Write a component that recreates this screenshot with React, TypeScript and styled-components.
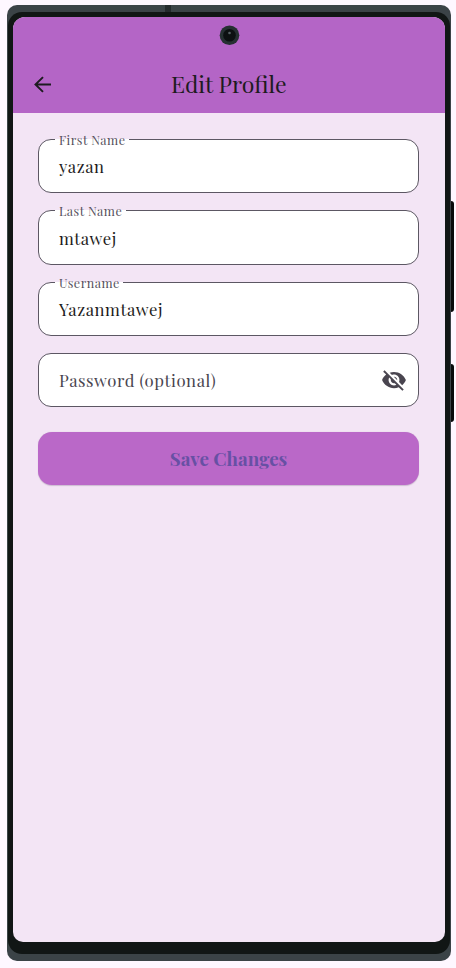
import React from "react";
import styled, { createGlobalStyle } from "styled-components";

const GlobalStyle = createGlobalStyle`
  * { box-sizing: border-box; }
  body {
    margin: 0;
    background: #fef7ff;
    font-family: "Playfair Display", "Liberation Serif", serif;
    overflow: hidden;
  }
`;

const Stage = styled.main`
  width: 456px;
  height: 968px;
  padding: 5px 0 0 7px;
`;

const Phone = styled.div`
  position: relative;
  width: 443.5px;
  height: 956px;
  padding: 7px 1px;
  border-radius: 10px;
  background: #3b4347;
`;

const Antenna = styled.span`
  position: absolute;
  top: 0;
  left: 158px;
  width: 6px;
  height: 7px;
  background: #242a2c;
`;

const SideButton = styled.span<{ $top: number; $height: number }>`
  position: absolute;
  left: 443px;
  top: ${(p) => p.$top}px;
  width: 4px;
  height: ${(p) => p.$height}px;
  border-radius: 0 3px 3px 0;
  border-left: 1px solid #3b4347;
  background: #080b0b;
`;

const Bezel = styled.div`
  height: 942px;
  padding: 5px 5px 12px;
  border-radius: 14px;
  background: #111615;
`;

const Screen = styled.div`
  width: 431.5px;
  height: 924.5px;
  border-radius: 12px 12px 10px 10px;
  overflow: hidden;
  background: #f3e5f5;
`;

const Header = styled.header`
  position: relative;
  height: 96.3px;
  padding: 38px 18px 0;
  display: grid;
  grid-template-columns: 24px 1fr 24px;
  align-items: center;
  background: #b465c6;
  color: #1d1b20;
`;

const Camera = styled.svg`
  position: absolute;
  top: 8px;
  left: 206px;
`;

const BackButton = styled.button`
  display: flex;
  padding: 0;
  border: 0;
  background: none;
  color: inherit;
`;

const Title = styled.h1`
  margin: 0;
  text-align: center;
  font-size: 23px;
  font-weight: 400;
  line-height: 32px;
  white-space: nowrap;
`;

const Form = styled.form`
  display: flex;
  flex-direction: column;
  gap: 17px;
  padding: 26px 25.5px 0 25px;
`;

const Field = styled.label`
  position: relative;
  display: flex;
  align-items: center;
  justify-content: space-between;
  height: 54.2px;
  padding: 0 11px 0 20px;
  border: 1px solid #5c5763;
  border-radius: 13px;
  background: #fff;
`;

const FloatingLabel = styled.span`
  position: absolute;
  top: -8px;
  left: 16px;
  padding: 0 3.5px 0 4px;
  background: linear-gradient(#f3e5f5 7px, #fff 7px);
  color: #55505c;
  font-size: 12.5px;
  line-height: 16px;
  letter-spacing: 0.5px;
  white-space: nowrap;
`;

const Value = styled.span<{ $muted?: boolean }>`
  color: ${(p) => (p.$muted ? "#49454f" : "#1d1b20")};
  font-size: 16.7px;
  line-height: 24px;
  letter-spacing: 0.55px;
`;

const SaveButton = styled.button`
  height: 53px;
  margin-top: 8px;
  padding: 0 0 1px;
  border: 0;
  border-radius: 14px;
  background: #ba68c8;
  box-shadow: 0 0.5px 1px rgba(70, 40, 80, 0.22);
  color: #6750a4;
  font-family: inherit;
  font-size: 18.8px;
  font-weight: 700;
`;

const fields = [
  { label: "First Name", value: "yazan" },
  { label: "Last Name", value: "mtawej" },
  { label: "Username", value: "Yazanmtawej" },
];

export default function App() {
  return (
    <>
      <GlobalStyle />
      <Stage>
        <Phone>
          <Antenna />
          <SideButton $top={196} $height={111} />
          <SideButton $top={359} $height={58} />
          <Bezel>
            <Screen>
              <Header>
                <Camera width="21" height="21" viewBox="0 0 21 21">
                  <circle cx="10.5" cy="10.3" r="9.8" fill="#263032" />
                  <circle cx="10.5" cy="10.3" r="6.3" fill="#0c1011" />
                  <circle cx="10.5" cy="8" r="1.3" fill="#566064" />
                </Camera>
                <BackButton type="button" aria-label="Back">
                  <svg width="25" height="25" viewBox="0 0 24 24">
                    <path
                      d="M20 11.1v1.8H6.9l5.8 5.8-1.4 1.4L3.1 12l8.2-8.1 1.4 1.4-5.8 5.8z"
                      fill="currentColor"
                    />
                  </svg>
                </BackButton>
                <Title>Edit Profile</Title>
              </Header>
              <Form>
                {fields.map((f) => (
                  <Field key={f.label}>
                    <FloatingLabel>{f.label}</FloatingLabel>
                    <Value>{f.value}</Value>
                  </Field>
                ))}
                <Field>
                  <Value $muted>Password (optional)</Value>
                  <svg width="26" height="26" viewBox="0 0 24 24" fill="#49454f">
                    <path d="M12 7c2.76 0 5 2.24 5 5 0 .65-.13 1.26-.36 1.83l2.92 2.92c1.51-1.26 2.7-2.89 3.43-4.75-1.73-4.39-6-7.5-11-7.5-1.4 0-2.74.25-3.98.7l2.16 2.16C10.74 7.13 11.35 7 12 7zM2 4.27l2.28 2.28.46.46C3.08 8.3 1.78 10.02 1 12c1.73 4.39 6 7.5 11 7.5 1.55 0 3.03-.3 4.38-.84l.42.42L19.73 22 21 20.73 3.27 3 2 4.27zM7.53 9.8l1.55 1.55c-.05.21-.08.43-.08.65 0 1.66 1.34 3 3 3 .22 0 .44-.03.65-.08l1.55 1.55c-.67.33-1.41.53-2.2.53-2.76 0-5-2.24-5-5 0-.79.2-1.53.53-2.2zm4.31-.78l3.15 3.15.02-.16c0-1.66-1.34-3-3-3l-.17.01z" />
                  </svg>
                </Field>
                <SaveButton type="button">Save Changes</SaveButton>
              </Form>
            </Screen>
          </Bezel>
        </Phone>
      </Stage>
    </>
  );
}
